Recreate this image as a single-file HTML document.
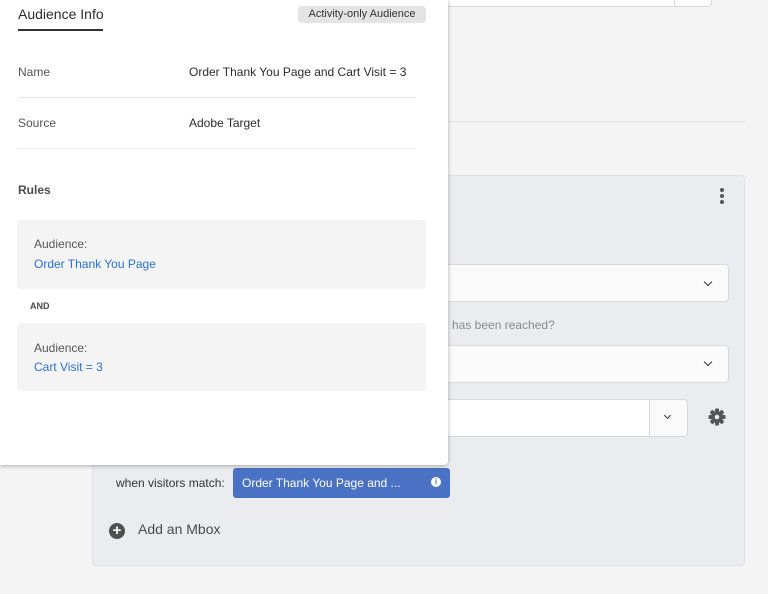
<!DOCTYPE html>
<html><head><style>
*{box-sizing:border-box;margin:0;padding:0}
body{width:768px;height:594px;background:#f4f4f4;font-family:"Liberation Sans",sans-serif;position:relative;overflow:hidden;color:#2c2c2c}
.abs{position:absolute}
.inp{position:absolute;background:#fafafa;border:1px solid #d8d8d8;border-radius:4px}
.chev{position:absolute;width:6px;height:6px;border-right:1.8px solid #333;border-bottom:1.8px solid #333;transform:rotate(45deg)}
.pop{position:absolute;left:0;top:0;width:448px;height:465px;background:#fff;box-shadow:0 1px 4px rgba(0,0,0,.3);border-radius:0 0 4px 0}
.lbl{position:absolute;font-size:12px;color:#555}
.val{position:absolute;font-size:12px;color:#2c2c2c}
.card{position:absolute;left:17px;width:409px;background:#f4f4f4;border-radius:4px}
.card .a{position:absolute;left:17px;font-size:12px;color:#555}
.card .b{position:absolute;left:17px;font-size:12px;color:#2d6fd1}
</style></head><body>
<div class="inp" style="left:420px;top:-10px;width:292px;height:17px;background:#fff"></div>
<div class="abs" style="left:674px;top:0;width:1px;height:7px;background:#d8d8d8"></div>
<div class="abs" style="left:448px;top:121px;width:297px;height:1px;background:#e2e2e2"></div>
<div class="abs" style="left:92px;top:175px;width:653px;height:391px;background:#ebecef;border:1px solid #dde0e5;border-radius:4px"></div>
<div class="abs" style="left:720px;top:188px;width:4px;height:4px;border-radius:2px;background:#555;box-shadow:0 6px 0 #555,0 12px 0 #555"></div>
<div class="inp" style="left:420px;top:264px;width:309px;height:38px"></div>
<div class="chev" style="left:705px;top:279px"></div>
<div class="abs" style="left:452px;top:318px;font-size:12px;color:#8a8a8a">has been reached?</div>
<div class="inp" style="left:420px;top:345px;width:309px;height:38px"></div>
<div class="chev" style="left:705px;top:359px"></div>
<div class="inp" style="left:420px;top:399px;width:268px;height:38px;background:#fff"></div>
<div class="abs" style="left:649px;top:400px;width:38px;height:36px;border-left:1px solid #d8d8d8;background:#fafafa;border-radius:0 4px 4px 0"></div>
<div class="chev" style="left:665px;top:413px;width:5px;height:5px;border-width:1.2px"></div>
<svg class="abs" style="left:708px;top:408px" width="18" height="18" viewBox="0 0 18 18">
<g fill="#555" transform="translate(9 9)">
<rect x="-2" y="-8.5" width="4" height="17" rx="1"/>
<rect x="-2" y="-8.5" width="4" height="17" rx="1" transform="rotate(45)"/>
<rect x="-2" y="-8.5" width="4" height="17" rx="1" transform="rotate(90)"/>
<rect x="-2" y="-8.5" width="4" height="17" rx="1" transform="rotate(135)"/>
<circle r="6"/>
<circle r="2.3" fill="#ebecef"/>
</g></svg>
<div class="abs" style="left:116px;top:476px;font-size:12px;color:#333">when visitors match:</div>
<div class="abs" style="left:233px;top:468px;width:217px;height:30px;background:#4a72c4;border-radius:3px;color:#fff;font-size:12px;padding:8px 0 0 9px">Order Thank You Page and ...</div>
<div class="abs" style="left:431px;top:477px;width:10px;height:10px;border-radius:50%;background:#fff;color:#4a72c4;font-size:8px;font-weight:bold;text-align:center;line-height:10px">i</div>
<div class="abs" style="left:109px;top:523px;width:16px;height:16px;border-radius:50%;background:#505050;color:#fff;font-weight:bold;font-size:15px;text-align:center;line-height:16px">+</div>
<div class="abs" style="left:138px;top:521px;font-size:14px;color:#4b4b4b">Add an Mbox</div>

<div class="pop">
<div class="abs" style="left:18px;top:6px;font-size:14px;color:#2c2c2c">Audience Info</div>
<div class="abs" style="left:18px;top:29px;width:85px;height:2px;background:#333"></div>
<div class="abs" style="left:298px;top:6px;width:128px;height:17px;background:#e4e4e4;border-radius:4px;font-size:11px;color:#333;text-align:center;line-height:17px">Activity-only Audience</div>
<div class="lbl" style="left:18px;top:65px">Name</div>
<div class="val" style="left:189px;top:65px">Order Thank You Page and Cart Visit = 3</div>
<div class="abs" style="left:18px;top:97px;width:398px;height:1px;background:#e8e8e8"></div>
<div class="lbl" style="left:18px;top:116px">Source</div>
<div class="val" style="left:189px;top:116px">Adobe Target</div>
<div class="abs" style="left:18px;top:148px;width:398px;height:1px;background:#e8e8e8"></div>
<div class="abs" style="left:18px;top:183px;font-size:12px;font-weight:bold;color:#4b4b4b">Rules</div>
<div class="card" style="top:220px;height:69px"><div class="a" style="top:17px">Audience:</div><div class="b" style="top:37px">Order Thank You Page</div></div>
<div class="abs" style="left:30px;top:301px;font-size:9px;font-weight:bold;color:#4b4b4b">AND</div>
<div class="card" style="top:323px;height:68px"><div class="a" style="top:18px">Audience:</div><div class="b" style="top:37px">Cart Visit = 3</div></div>
</div>
</body></html>
